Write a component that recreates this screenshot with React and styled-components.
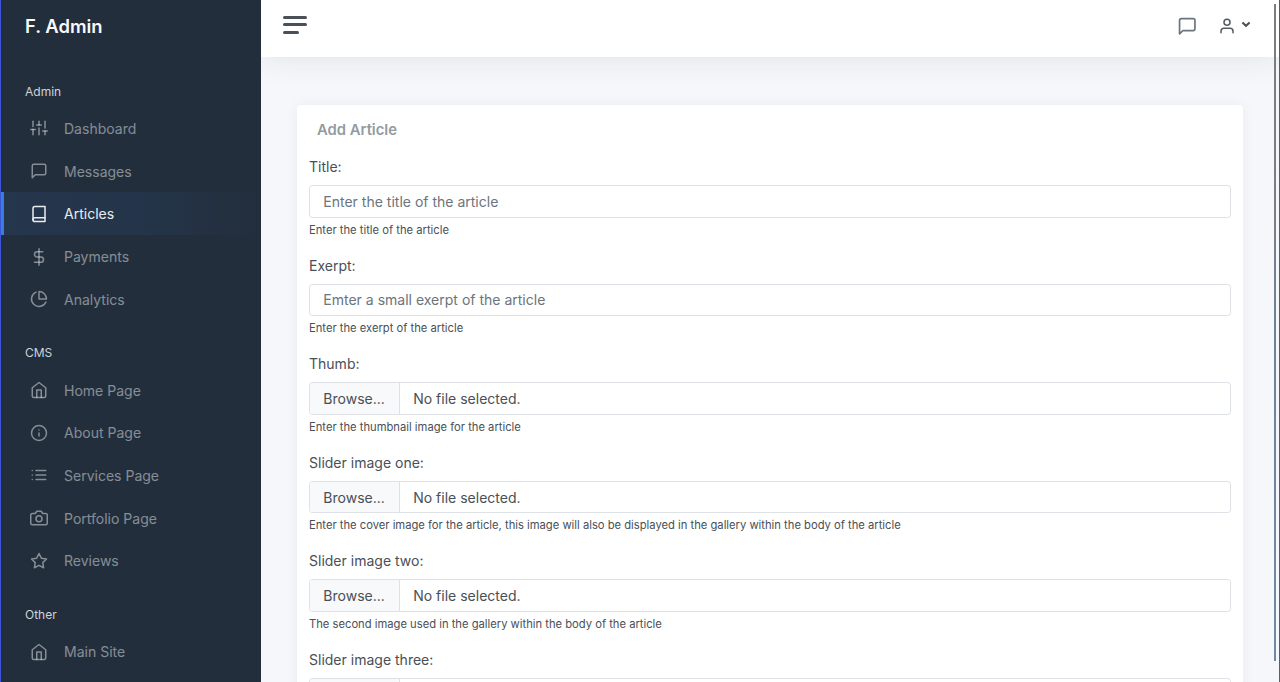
import React from "react";
import styled, { createGlobalStyle, css } from "styled-components";
import {
  FiSliders, FiMessageSquare, FiBook, FiDollarSign, FiPieChart,
  FiHome, FiInfo, FiList, FiCamera, FiStar, FiUser,
} from "react-icons/fi";

const GlobalStyle = createGlobalStyle`
  * { box-sizing: border-box; }
  html, body { margin: 0; height: 100%; overflow: hidden; }
  body {
    font-family: Inter, "Liberation Sans", sans-serif;
    font-size: 14px;
    line-height: 1.5;
    color: #495057;
    background: #f5f7fb;
  }
`;

const Shell = styled.div`
  display: flex;
  height: 682px;
  overflow: hidden;
  border-left: 1px solid #3b57d5;
  border-right: 1px solid #3b57d5;
`;

const Sidebar = styled.nav`
  flex: 0 0 260px;
  position: relative;
  z-index: 1;
  background: #222e3c;
  overflow: hidden;
`;

const Brand = styled.div`
  padding: 12px 24px 0;
  height: 68px;
  font-size: 18.4px;
  line-height: 28px;
  font-weight: 600;
  color: #f8f9fa;
`;

const GroupTitle = styled.div`
  height: ${(p) => (p.$first ? 39.05 : 48.06)}px;
  padding: ${(p) => (p.$first ? 15 : 23.75)}px 24px 0;
  font-size: 12px;
  line-height: 18px;
  color: #ced4da;
`;

const NavItem = styled.a`
  display: flex;
  align-items: center;
  height: 42.72px;
  padding-left: 26px;
  border-left: 3px solid transparent;
  color: rgba(233, 236, 239, 0.5);
  font-size: 14.03px;

  svg {
    width: 18px;
    height: 18px;
    margin-right: 16px;
  }

  ${(p) => p.$active && css`
    color: #e9ecef;
    border-left-color: #3b7ddd;
    background: linear-gradient(90deg, rgba(59, 125, 221, 0.1), rgba(59, 125, 221, 0.088) 50%, transparent);
  `}
`;

const Main = styled.div`
  flex: 1;
  min-width: 0;
  display: flex;
  flex-direction: column;
`;

const Navbar = styled.header`
  flex: 0 0 57px;
  display: flex;
  align-items: flex-start;
  padding: 16px 28px 0 22px;
  background: #fff;
  box-shadow: 0 0 32px 0 rgba(33, 37, 41, 0.1);
`;

const Hamburger = styled.div`
  display: flex;
  flex-direction: column;
  gap: 4px;
  span {
    width: 24px;
    height: 3px;
    border-radius: 2px;
    background: #495057;
  }
  span:last-child { width: 16px; margin-top: 1px; }
`;

const NavActions = styled.div`
  margin-left: auto;
  display: flex;
  align-items: flex-start;
  color: #6c757d;
`;

const MessageIcon = styled(FiMessageSquare)`
  width: 20.5px;
  height: 20.5px;
  margin-right: 20.9px;
  margin-top: -0.5px;
`;

const UserIcon = styled(FiUser)`
  width: 18px;
  height: 18px;
  margin-top: 1px;
  color: #555a5f;
`;

const Caret = styled.svg`
  width: 10px;
  height: 8px;
  margin: 5px 0 0 5px;
`;

const Content = styled.main`
  padding: 48px 36px 0;
`;

const Card = styled.section`
  height: 640px;
  width: 946px;
  padding: 14px 12px 0;
  border-radius: 4px;
  background: #fff;
  box-shadow: 0 0 14px 0 rgba(33, 37, 41, 0.05);
`;

const CardTitle = styled.h5`
  margin: 0 0 15px;
  padding-left: 8px;
  font-size: 14.8px;
  line-height: 22px;
  font-weight: 600;
  color: #939ba2;
`;

const Field = styled.div`
  height: 98.6px;
`;

const Label = styled.label`
  display: block;
  height: 29px;
  font-size: 14.03px;
  line-height: 22px;
`;

const Control = styled.div`
  display: flex;
  align-items: center;
  height: 32.6px;
  border: 1px solid #dee2e6;
  border-radius: 3.2px;
  background: #fff;
  overflow: hidden;
  font-size: 14.03px;
`;

const TextInput = styled.input`
  flex: 1;
  border: 0;
  outline: 0;
  padding: 0 13.3px;
  font: inherit;
  color: #495057;
  background: transparent;
  &::placeholder { color: #6c757d; opacity: 1; }
`;

const Browse = styled.span`
  display: flex;
  align-items: center;
  align-self: stretch;
  width: 90px;
  padding-left: 13.3px;
  margin-right: 13.2px;
  background: #f8f9fa;
  border-right: 1px solid #dee2e6;
`;

const Help = styled.small`
  display: block;
  margin-top: 4px;
  font-size: 11.21px;
  line-height: 17px;
`;

const Scroll = styled.div`
  position: absolute;
  top: 4px;
  left: 1274px;
  width: 2px;
  height: 657px;
  background: linear-gradient(#7d7d7d 0, #7d7d7d 22%, #6f8299 50%, #708aa6 100%);
`;

const groups = [
  ["Admin", [
    ["Dashboard", FiSliders], ["Messages", FiMessageSquare], ["Articles", FiBook],
    ["Payments", FiDollarSign], ["Analytics", FiPieChart],
  ]],
  ["CMS", [
    ["Home Page", FiHome], ["About Page", FiInfo], ["Services Page", FiList],
    ["Portfolio Page", FiCamera], ["Reviews", FiStar],
  ]],
  ["Other", [["Main Site", FiHome]]],
];

const browse = "Browse...";
const empty = "No file selected.";

const fields = [
  { label: "Title:", placeholder: "Enter the title of the article", help: "Enter the title of the article" },
  { label: "Exerpt:", placeholder: "Emter a small exerpt of the article", help: "Enter the exerpt of the article" },
  { label: "Thumb:", browse, empty, help: "Enter the thumbnail image for the article" },
  { label: "Slider image one:", browse, empty, help: "Enter the cover image for the article, this image will also be displayed in the gallery within the body of the article" },
  { label: "Slider image two:", browse, empty, help: "The second image used in the gallery within the body of the article" },
  { label: "Slider image three:" },
];

export default function App() {
  return (
    <>
      <GlobalStyle />
      <Shell>
        <Sidebar>
          <Brand>F. Admin</Brand>
          {groups.map(([title, items], i) => (
            <React.Fragment key={title}>
              <GroupTitle $first={i === 0}>{title}</GroupTitle>
              {items.map(([name, Icon]) => (
                <NavItem key={name} $active={name === "Articles"}>
                  <Icon />
                  {name}
                </NavItem>
              ))}
            </React.Fragment>
          ))}
        </Sidebar>
        <Main>
          <Navbar>
            <Hamburger><span /><span /><span /></Hamburger>
            <NavActions>
              <MessageIcon />
              <UserIcon />
              <Caret viewBox="0 0 10 8" fill="none" stroke="#495057" strokeWidth="2">
                <path d="M1.4 1.4 5 4.8 8.6 1.4" />
              </Caret>
            </NavActions>
          </Navbar>
          <Content>
            <Card>
              <CardTitle>Add Article</CardTitle>
              {fields.map((f) => (
                <Field key={f.label}>
                  <Label>{f.label}</Label>
                  <Control>
                    {f.placeholder ? (
                      <TextInput placeholder={f.placeholder} />
                    ) : (
                      <>
                        <Browse>{f.browse}</Browse>
                        {f.empty}
                      </>
                    )}
                  </Control>
                  {f.help && <Help>{f.help}</Help>}
                </Field>
              ))}
            </Card>
          </Content>
        </Main>
      </Shell>
      <Scroll />
    </>
  );
}
